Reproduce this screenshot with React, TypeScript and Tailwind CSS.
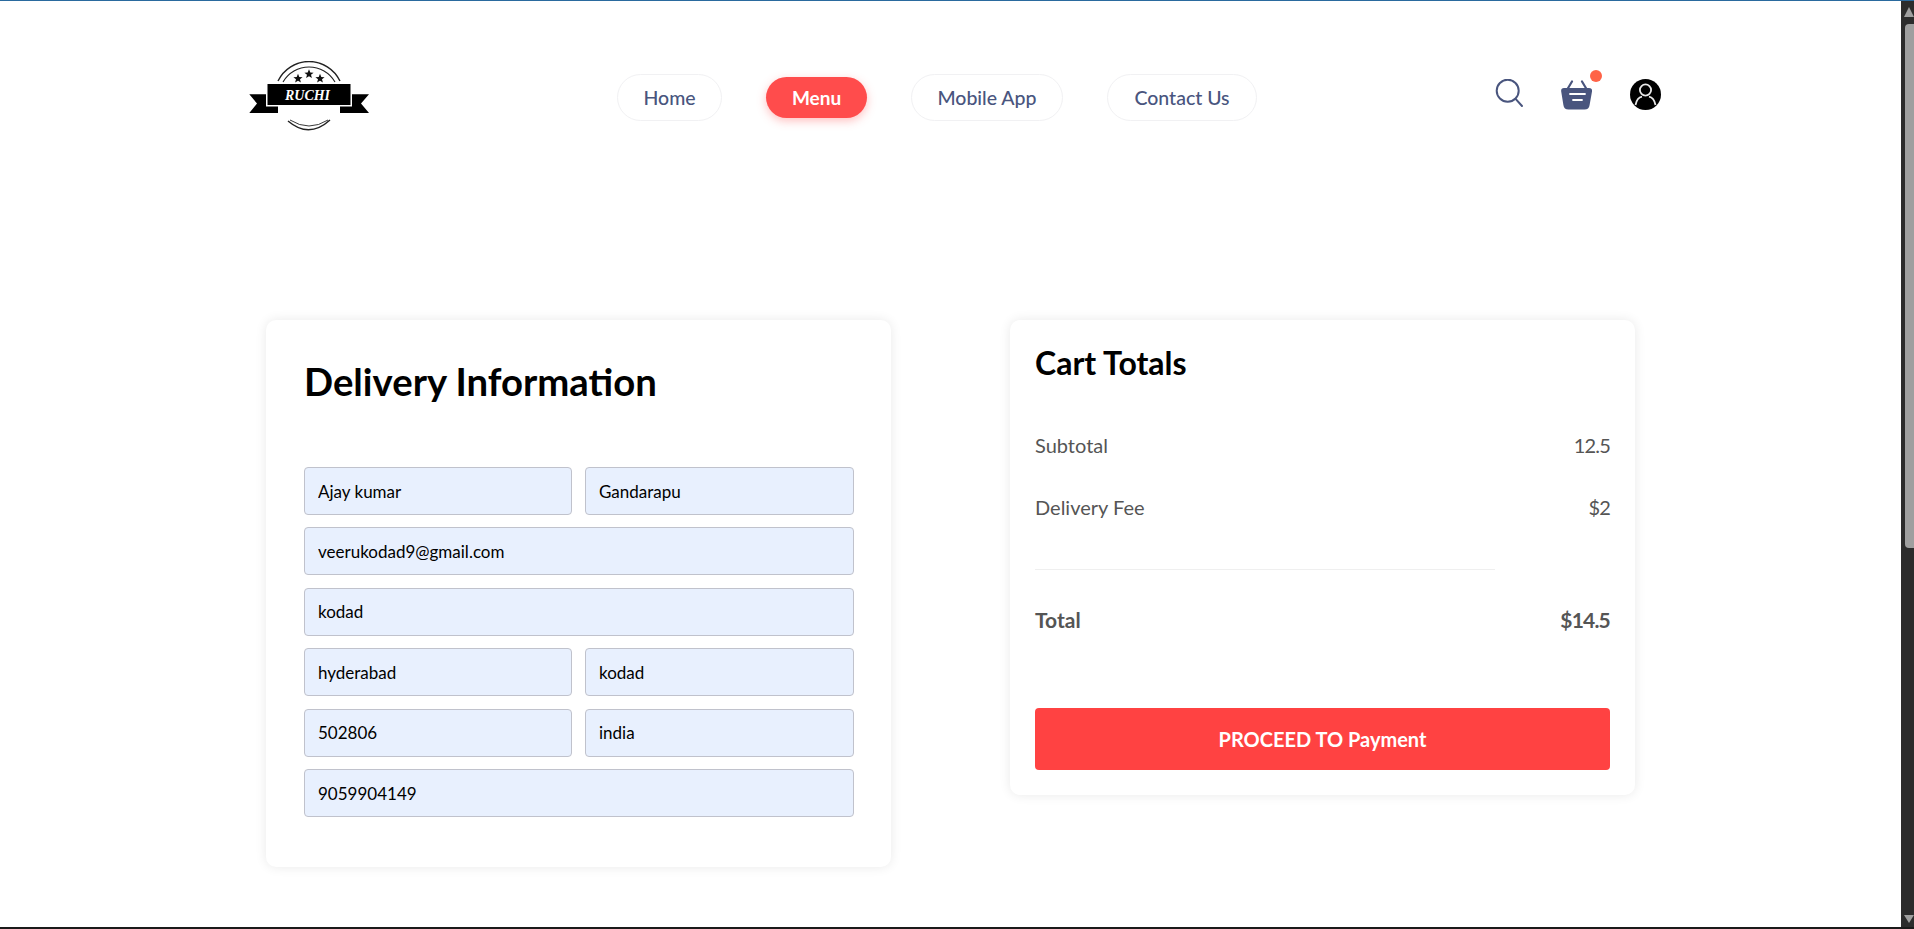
import React from 'react';

const font = { fontFamily: 'Lato, "Noto Sans", sans-serif' };

const Logo = () => (
  <svg width="120" height="72" viewBox="19 21 120 72" className="shrink-0">
    <path d="M48 41 A34.4 34.4 0 0 1 110 41" fill="none" stroke="#222" strokeWidth="1.4" />
    <path d="M53 42 A30 30 0 0 1 105 42" fill="none" stroke="#222" strokeWidth="1.1" />
    <polygon points="68,33.8 69.3,37 72.6,37.2 70,39.3 70.9,42.4 68,40.7 65.1,42.4 66,39.3 63.4,37.2 66.7,37" fill="#111" />
    <polygon points="79,29.3 80.3,32.5 83.6,32.7 81,34.8 81.9,37.9 79,36.2 76.1,37.9 77,34.8 74.4,32.7 77.7,32.5" fill="#111" />
    <polygon points="90,33.8 91.3,37 94.6,37.2 92,39.3 92.9,42.4 90,40.7 87.1,42.4 88,39.3 85.4,37.2 88.7,37" fill="#111" />
    <rect x="37.5" y="44" width="83" height="21" fill="#000" />
    <polygon points="19.3,54.3 36,54.3 36,66.5 48,66.5 48,73 19.3,73 27,63.5" fill="#000" />
    <polygon points="139,54.3 122,54.3 122,66.5 110,66.5 110,73 139,73 131,63.5" fill="#000" />
    <text x="77.5" y="59.5" textAnchor="middle" fill="#fff" fontSize="14" fontStyle="italic" fontWeight="700" fontFamily='"Liberation Serif", serif'>RUCHI</text>
    <path d="M60 80 Q79 92 98 80" fill="none" stroke="#222" strokeWidth="0.9" />
    <path d="M58 81 Q79 99 100 80" fill="none" stroke="#222" strokeWidth="1.4" />
  </svg>
);

const NavPill = ({ label, width }: { label: string; width: string }) => (
  <a className={`flex h-[47px] items-center justify-center rounded-full border border-[#f1f1f3] pt-[1px] text-[19.5px] font-medium text-[#49557e] ${width}`}>
    {label}
  </a>
);

const SearchIcon = () => (
  <svg width="30" height="30" viewBox="0 0 30 30" fill="none" stroke="#49557e" strokeWidth="2">
    <circle cx="12.7" cy="11.7" r="11" />
    <path d="M20.6 19.8 L27 27" strokeLinecap="round" />
  </svg>
);

const BasketIcon = () => (
  <div className="relative top-[1px] h-[30px] w-[32px]">
    <svg width="32" height="30" viewBox="0 0 32 30" fill="none">
      <path d="M11 1.5 L6.5 9 M21 1.5 L25.5 9" stroke="#49557e" strokeWidth="2.2" strokeLinecap="round" />
      <path d="M3 8 H28 Q31.5 8 31 11.5 L28.6 25 Q28 29.5 23.5 29.5 H7.5 Q3 29.5 2.4 25 L0.2 11.5 Q-0.3 8 3 8 Z" fill="#49557e" />
      <path d="M9 14 H24 M12 20 H21" stroke="#fff" strokeWidth="1.8" strokeLinecap="round" />
    </svg>
    <span className="absolute -top-[10px] left-[29px] h-3 w-3 rounded-full bg-[#ff6347]" />
  </div>
);

const ProfileIcon = () => (
  <svg width="31" height="31" viewBox="0 0 31 31">
    <circle cx="15.5" cy="15.5" r="15.5" fill="#000" />
    <circle cx="15.5" cy="11" r="5.6" fill="none" stroke="#e8e8e8" strokeWidth="1.8" />
    <path d="M5.5 26 Q7 18.5 12 17.6 M25.5 26 Q24 18.5 19 17.6" fill="none" stroke="#e8e8e8" strokeWidth="1.8" />
  </svg>
);

const Field = ({ value }: { value: string }) => (
  <input
    readOnly
    defaultValue={value}
    style={font}
    className="h-[48px] w-full min-w-0 rounded-[4px] border border-[#c0c2cc] bg-[#e8f0fe] px-[13px] text-[17px] text-black outline-none"
  />
);

const Row = ({ label, value, bold }: { label: string; value: string; bold?: boolean }) => (
  <div className={`flex justify-between leading-[30px] text-[#555555] ${bold ? 'text-[21px] font-bold' : 'text-[20px]'}`}>
    <span>{label}</span>
    <span className="tracking-[-0.8px]">{value}</span>
  </div>
);

export default function App() {
  return (
    <div style={font} className="flex h-screen flex-col overflow-hidden bg-white">
      <div className="h-px shrink-0 bg-[#2a6a9e]" />
      <div className="flex min-h-0 flex-1">
        <div className="min-w-0 flex-1">
          <header className="ml-[249px] mt-[60px] flex w-[1412px] items-center">
            <Logo />
            <nav className="ml-[248px] flex items-center gap-[44px]">
              <NavPill label="Home" width="w-[105px]" />
              <a className="flex h-[41px] w-[101px] items-center justify-center rounded-full bg-[#ff4c4c] pt-[3px] text-[19px] font-bold text-white shadow-[0_3px_10px_rgba(255,76,76,0.35)]">
                Menu
              </a>
              <NavPill label="Mobile App" width="w-[152px]" />
              <NavPill label="Contact Us" width="w-[150px]" />
            </nav>
            <div className="ml-auto flex -translate-y-[3px] items-center">
              <SearchIcon />
              <div className="ml-[36px]">
                <BasketIcon />
              </div>
              <div className="ml-[37px]">
                <ProfileIcon />
              </div>
            </div>
          </header>
          <main className="ml-[266px] mt-[187px] flex items-start gap-[119px]">
            <section className="w-[625px] rounded-[10px] bg-white pb-[50px] pl-[38px] pr-[37px] pt-[38px] shadow-[0_0_12px_rgba(0,0,0,0.09)]">
              <h2 className="text-[38.3px] font-bold leading-[46px] text-black">Delivery Information</h2>
              <div className="mt-[63px] flex flex-col gap-[12.45px]">
                <div className="grid grid-cols-[268px_1fr] gap-[13px]">
                  <Field value="Ajay kumar" />
                  <Field value="Gandarapu" />
                </div>
                <Field value="veerukodad9@gmail.com" />
                <Field value="kodad" />
                <div className="grid grid-cols-[268px_1fr] gap-[13px]">
                  <Field value="hyderabad" />
                  <Field value="kodad" />
                </div>
                <div className="grid grid-cols-[268px_1fr] gap-[13px]">
                  <Field value="502806" />
                  <Field value="india" />
                </div>
                <Field value="9059904149" />
              </div>
            </section>
            <section className="w-[625px] rounded-[10px] bg-white p-[25px] shadow-[0_0_12px_rgba(0,0,0,0.09)]">
              <h2 className="text-[32px] font-bold leading-[36px] text-black">Cart Totals</h2>
              <div className="mt-[49px]">
                <Row label="Subtotal" value="12.5" />
                <div className="mt-[32px]">
                  <Row label="Delivery Fee" value="$2" />
                </div>
                <hr className="mt-[47px] w-[460px] border-[#efefef]" />
                <div className="mt-[35px]">
                  <Row label="Total" value="$14.5" bold />
                </div>
              </div>
              <button className="mt-[73px] h-[62px] w-full rounded-[4px] bg-[#ff4242] text-[20px] font-bold text-white">
                PROCEED TO Payment
              </button>
            </section>
          </main>
        </div>
        <div className="flex w-[13px] shrink-0 flex-col items-end bg-[#2c2c2c]">
          <svg width="10" height="10" viewBox="0 0 10 10" className="mt-[6px] shrink-0">
            <polygon points="5,0 10,10 0,10" fill="#9f9f9f" />
          </svg>
          <div className="mt-[7px] h-[524px] w-[9px] rounded-l-[4px] bg-[#9f9f9f]" />
          <svg width="10" height="8" viewBox="0 0 10 8" className="mb-[4px] mt-auto shrink-0">
            <polygon points="0,0 10,0 5,8" fill="#9f9f9f" />
          </svg>
        </div>
      </div>
      <div className="h-[2px] shrink-0 bg-[#1a1a1a]" />
    </div>
  );
}
